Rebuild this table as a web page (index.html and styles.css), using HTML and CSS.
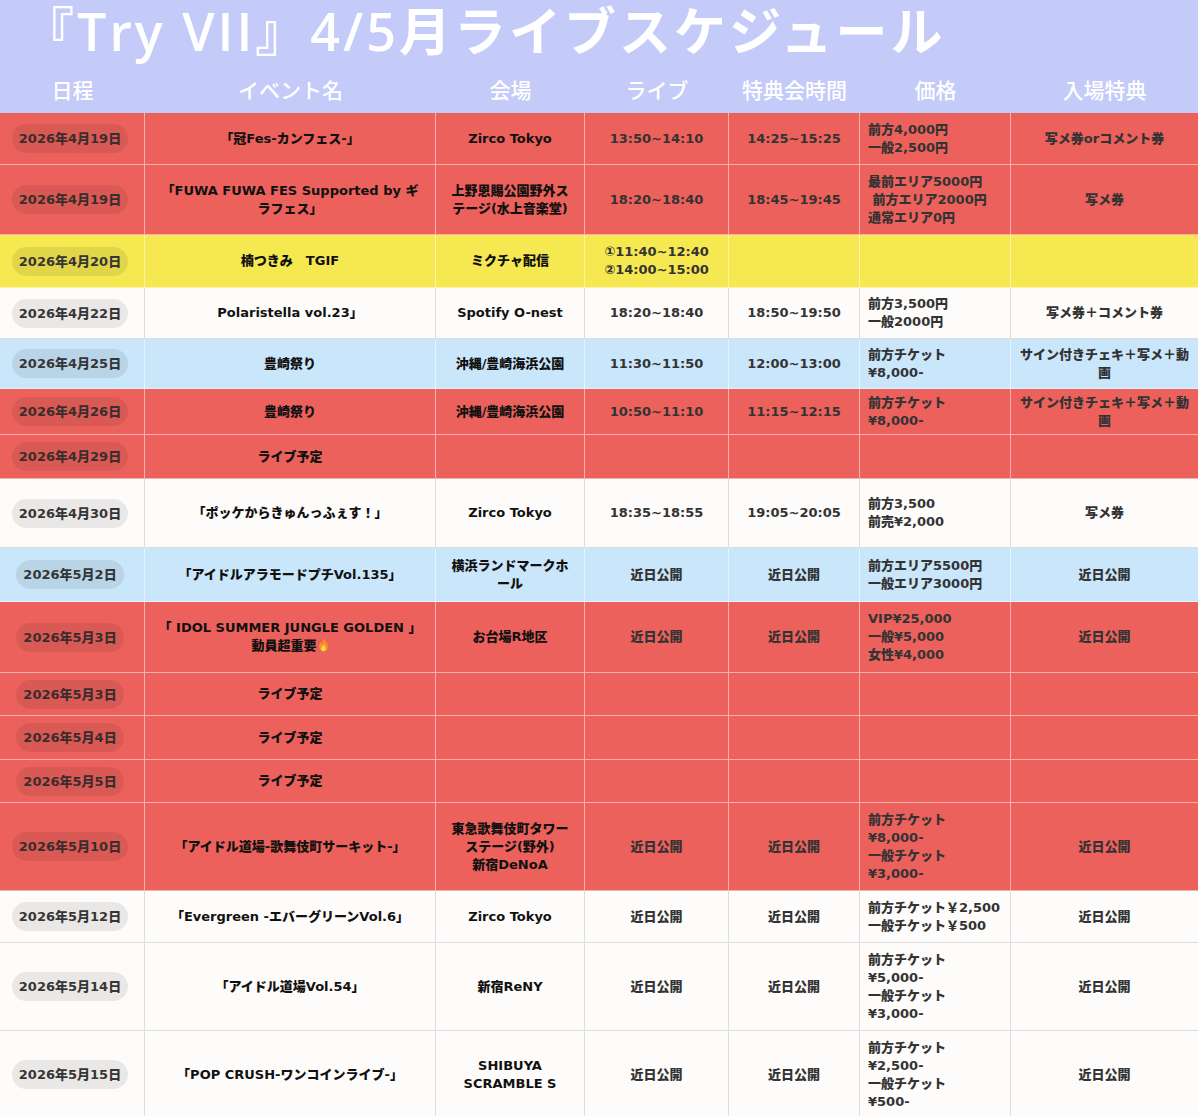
FILE: index.html
```html
<!DOCTYPE html>
<html lang="ja">
<head>
<meta charset="utf-8">
<title>『Try VII』4/5月ライブスケジュール</title>
<link rel="stylesheet" href="styles.css">
</head>
<body>
<div class="page">
  <h1 class="title">『Try VII』4/5月ライブスケジュール</h1>
  <table class="schedule">
    <colgroup>
      <col class="c-date"><col class="c-event"><col class="c-venue"><col class="c-live"><col class="c-meet"><col class="c-price"><col class="c-bonus">
    </colgroup>
    <thead>
      <tr><th>日程</th><th>イベント名</th><th>会場</th><th>ライブ</th><th>特典会時間</th><th>価格</th><th>入場特典</th></tr>
    </thead>
    <tbody>
      <tr class="red h52">
        <td class="date"><span class="pill">2026年4月19日</span></td>
        <td class="event">「冠Fes-カンフェス-」</td>
        <td class="venue">Zirco Tokyo</td>
        <td>13:50~14:10</td>
        <td>14:25~15:25</td>
        <td class="price">前方4,000円<br>一般2,500円</td>
        <td>写メ券orコメント券</td>
      </tr>
      <tr class="red h70">
        <td class="date"><span class="pill">2026年4月19日</span></td>
        <td class="event">「FUWA FUWA FES Supported by ギ<br>ラフェス」</td>
        <td class="venue">上野恩賜公園野外ス<br>テージ(水上音楽堂)</td>
        <td>18:20~18:40</td>
        <td>18:45~19:45</td>
        <td class="price">最前エリア5000円<br>&nbsp;前方エリア2000円<br>通常エリア0円</td>
        <td>写メ券</td>
      </tr>
      <tr class="yellow h53">
        <td class="date"><span class="pill">2026年4月20日</span></td>
        <td class="event">楠つきみ　TGIF</td>
        <td class="venue">ミクチャ配信</td>
        <td class="multi">①11:40~12:40<br>②14:00~15:00</td>
        <td></td>
        <td class="price"></td>
        <td></td>
      </tr>
      <tr class="white h51">
        <td class="date"><span class="pill">2026年4月22日</span></td>
        <td class="event">Polaristella vol.23」</td>
        <td class="venue">Spotify O-nest</td>
        <td>18:20~18:40</td>
        <td>18:50~19:50</td>
        <td class="price">前方3,500円<br>一般2000円</td>
        <td>写メ券＋コメント券</td>
      </tr>
      <tr class="blue h50">
        <td class="date"><span class="pill">2026年4月25日</span></td>
        <td class="event">豊崎祭り</td>
        <td class="venue">沖縄/豊崎海浜公園</td>
        <td>11:30~11:50</td>
        <td>12:00~13:00</td>
        <td class="price">前方チケット<br>¥8,000-</td>
        <td>サイン付きチェキ＋写メ＋動<br>画</td>
      </tr>
      <tr class="red h46">
        <td class="date"><span class="pill">2026年4月26日</span></td>
        <td class="event">豊崎祭り</td>
        <td class="venue">沖縄/豊崎海浜公園</td>
        <td>10:50~11:10</td>
        <td>11:15~12:15</td>
        <td class="price">前方チケット<br>¥8,000-</td>
        <td>サイン付きチェキ＋写メ＋動<br>画</td>
      </tr>
      <tr class="red h44">
        <td class="date"><span class="pill">2026年4月29日</span></td>
        <td class="event">ライブ予定</td>
        <td class="venue"></td>
        <td></td>
        <td></td>
        <td class="price"></td>
        <td></td>
      </tr>
      <tr class="white h69">
        <td class="date"><span class="pill">2026年4月30日</span></td>
        <td class="event">「ポッケからきゅんっふぇす！」</td>
        <td class="venue">Zirco Tokyo</td>
        <td>18:35~18:55</td>
        <td>19:05~20:05</td>
        <td class="price">前方3,500<br>前売¥2,000</td>
        <td>写メ券</td>
      </tr>
      <tr class="blue h54">
        <td class="date"><span class="pill">2026年5月2日</span></td>
        <td class="event">「アイドルアラモードプチVol.135」</td>
        <td class="venue">横浜ランドマークホ<br>ール</td>
        <td>近日公開</td>
        <td>近日公開</td>
        <td class="price">前方エリア5500円<br>一般エリア3000円</td>
        <td>近日公開</td>
      </tr>
      <tr class="red h71">
        <td class="date"><span class="pill">2026年5月3日</span></td>
        <td class="event">「 IDOL SUMMER JUNGLE GOLDEN 」<br>動員超重要<svg class="flame" viewBox="0 0 12 16" width="11" height="15" aria-hidden="true"><path d="M6 0.5C6.6 3.5 10.8 5.6 10.8 10.2C10.8 13.3 8.6 15.5 6 15.5C3.4 15.5 1.2 13.3 1.2 10.4C1.2 7.8 2.9 6.4 3.6 4.8C4.2 6.4 4.4 7.4 5.2 7.9C5.4 5.5 5.2 3 6 0.5Z" fill="#f7931e"/><path d="M6 8.2C7.4 9.8 8.6 11 8.6 12.6C8.6 14.2 7.4 15.4 6 15.4C4.6 15.4 3.4 14.2 3.4 12.6C3.4 11.2 4.6 10.2 6 8.2Z" fill="#ffd54a"/></svg></td>
        <td class="venue">お台場R地区</td>
        <td>近日公開</td>
        <td>近日公開</td>
        <td class="price">VIP¥25,000<br>一般¥5,000<br>女性¥4,000</td>
        <td>近日公開</td>
      </tr>
      <tr class="red h43">
        <td class="date"><span class="pill">2026年5月3日</span></td>
        <td class="event">ライブ予定</td>
        <td class="venue"></td>
        <td></td>
        <td></td>
        <td class="price"></td>
        <td></td>
      </tr>
      <tr class="red h44">
        <td class="date"><span class="pill">2026年5月4日</span></td>
        <td class="event">ライブ予定</td>
        <td class="venue"></td>
        <td></td>
        <td></td>
        <td class="price"></td>
        <td></td>
      </tr>
      <tr class="red h43">
        <td class="date"><span class="pill">2026年5月5日</span></td>
        <td class="event">ライブ予定</td>
        <td class="venue"></td>
        <td></td>
        <td></td>
        <td class="price"></td>
        <td></td>
      </tr>
      <tr class="red h88">
        <td class="date"><span class="pill">2026年5月10日</span></td>
        <td class="event">「アイドル道場-歌舞伎町サーキット-」</td>
        <td class="venue">東急歌舞伎町タワー<br>ステージ(野外)<br>新宿DeNoA</td>
        <td>近日公開</td>
        <td>近日公開</td>
        <td class="price">前方チケット<br>¥8,000-<br>一般チケット<br>¥3,000-</td>
        <td>近日公開</td>
      </tr>
      <tr class="white h52">
        <td class="date"><span class="pill">2026年5月12日</span></td>
        <td class="event">「Evergreen -エバーグリーンVol.6」</td>
        <td class="venue">Zirco Tokyo</td>
        <td>近日公開</td>
        <td>近日公開</td>
        <td class="price">前方チケット￥2,500<br>一般チケット￥500</td>
        <td>近日公開</td>
      </tr>
      <tr class="white h88">
        <td class="date"><span class="pill">2026年5月14日</span></td>
        <td class="event">「アイドル道場Vol.54」</td>
        <td class="venue">新宿ReNY</td>
        <td>近日公開</td>
        <td>近日公開</td>
        <td class="price">前方チケット<br>¥5,000-<br>一般チケット<br>¥3,000-</td>
        <td>近日公開</td>
      </tr>
      <tr class="white h88">
        <td class="date"><span class="pill">2026年5月15日</span></td>
        <td class="event">「POP CRUSH-ワンコインライブ-」</td>
        <td class="venue">SHIBUYA<br>SCRAMBLE S</td>
        <td>近日公開</td>
        <td>近日公開</td>
        <td class="price">前方チケット<br>¥2,500-<br>一般チケット<br>¥500-</td>
        <td>近日公開</td>
      </tr>
    </tbody>
  </table>
</div>
</body>
</html>
```
FILE: styles.css
```css
html, body {
  margin: 0;
  padding: 0;
}
body {
  width: 1198px;
  background: #fdfcfa;
  font-family: "DejaVu Sans", "Noto Sans CJK JP", sans-serif;
}
.page {
  width: 1198px;
  background: #c4cbf9;
}
.title {
  margin: 0;
  padding: 0 0 3px 22px;
  font-family: "Open Sans", "Noto Sans CJK JP", sans-serif;
  font-size: 52px;
  line-height: 62px;
  font-weight: 600;
  letter-spacing: 3px;
  color: #ffffff;
  white-space: nowrap;
}
.schedule {
  width: 1198px;
  table-layout: fixed;
  border-collapse: separate;
  border-spacing: 0;
}
.c-date { width: 145px; }
.c-event { width: 291px; }
.c-venue { width: 149px; }
.c-live { width: 144px; }
.c-meet { width: 131px; }
.c-price { width: 151px; }
.c-bonus { width: 187px; }

.schedule th {
  height: 48px;
  padding: 0;
  font-size: 21px;
  line-height: 24px;
  font-weight: 500;
  color: #ffffff;
  text-align: center;
  vertical-align: middle;
  font-family: "Noto Sans CJK JP", sans-serif;
}
.schedule td {
  padding: 2px 6px;
  text-align: center;
  vertical-align: middle;
  font-size: 13px;
  line-height: 18px;
  font-weight: 900;
  color: #333333;
  border-right: 1px solid rgba(255, 255, 255, 0.5);
  border-bottom: 1px solid rgba(255, 255, 255, 0.5);
  overflow: hidden;
  white-space: nowrap;
}
.schedule td:last-child {
  border-right: none;
}
.schedule td.event,
.schedule td.venue {
  color: #111111;
}
.schedule td.price {
  text-align: left;
  padding-left: 8px;
}
.schedule td.date {
  padding: 0 4px 0 0;
}
.pill {
  display: inline-block;
  padding: 0 7px;
  height: 29px;
  line-height: 29px;
  border-radius: 15px;
  background: rgba(0, 0, 0, 0.08);
  color: #363636;
  font-size: 13px;
}
.flame {
  vertical-align: -2px;
  margin-left: 1px;
}

.red td { background: #ec615c; }
.yellow td { background: #f5e850; }
.blue td { background: #c9e6fb; }
.white td {
  background: #fdfcfa;
  border-right-color: #dedede;
  border-bottom-color: #dedede;
}
.red .pill { color: #3a2d2d; }

.h43 { height: 43px; }
.h44 { height: 44px; }
.h46 { height: 46px; }
.h50 { height: 50px; }
.h51 { height: 51px; }
.h52 { height: 52px; }
.h53 { height: 53px; }
.h54 { height: 54px; }
.h69 { height: 69px; }
.h70 { height: 70px; }
.h71 { height: 71px; }
.h88 { height: 88px; }
```
